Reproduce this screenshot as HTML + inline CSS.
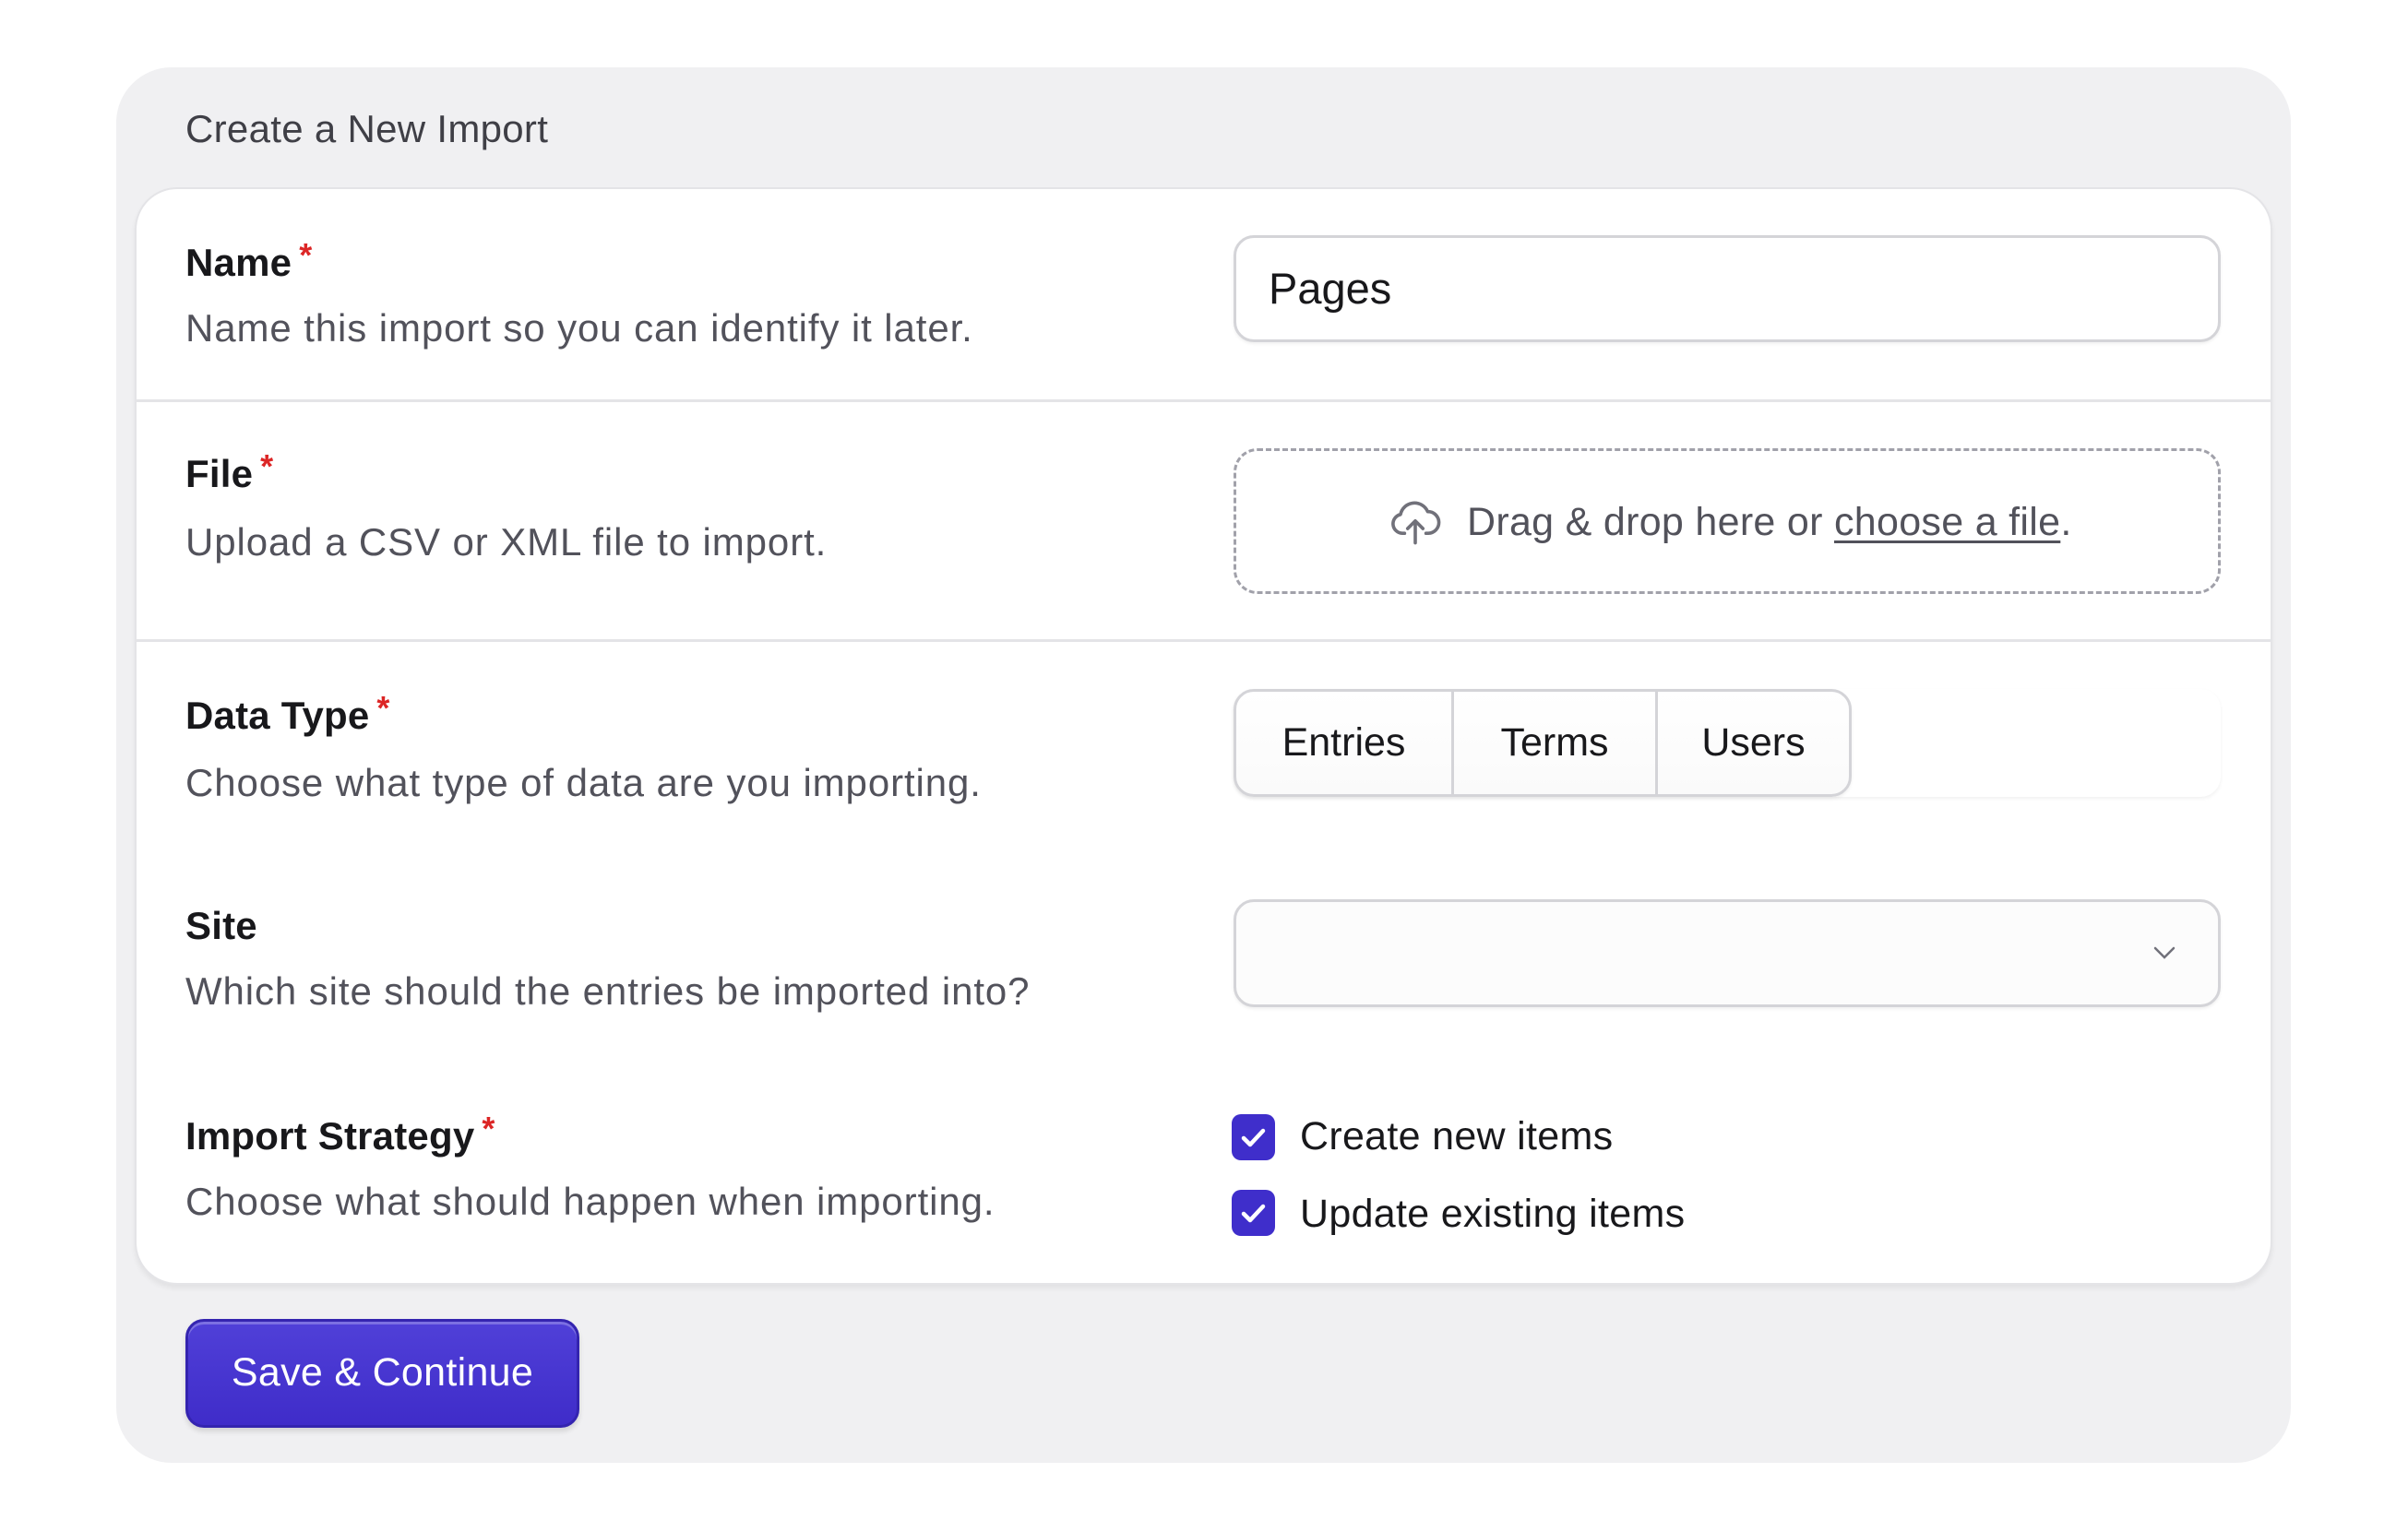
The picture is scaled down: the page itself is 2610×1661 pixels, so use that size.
<!DOCTYPE html>
<html><head><meta charset="utf-8"><style>
*{box-sizing:border-box;margin:0;padding:0}
body{width:2610px;height:1661px;background:#fff;font-family:"Liberation Sans",sans-serif;position:relative;overflow:hidden}
.a{position:absolute}
.outer{left:126px;top:73px;width:2357px;height:1513px;background:#f0f0f2;border-radius:60px}
.title{left:201px;top:114px;font-size:42px;color:#3f3f46;line-height:52px;letter-spacing:0.3px}
.card{left:146px;top:203px;width:2317px;height:1190px;background:#fff;border-radius:46px;border:2px solid #e4e4e7;box-shadow:0 4px 6px rgba(0,0,0,.06)}
.sep{left:148px;width:2313px;height:3px;background:#e4e4e7}
.lbl{left:201px;font-size:42px;font-weight:bold;color:#18181b;line-height:50px;letter-spacing:0.2px}
.lbl i{color:#dc2626;font-style:normal;font-size:36px;vertical-align:top;position:relative;top:-8px;margin-left:8px}
.desc{left:201px;font-size:42px;color:#52525b;line-height:50px;letter-spacing:0.9px}
.box{border:3px solid #d4d4d8;border-radius:22px;background:#fff;box-shadow:0 2px 3px rgba(0,0,0,.06)}
.cb{left:1335px;width:47px;height:50px;background:#3f2ecb;border-radius:10px}
.cbt{left:1409px;font-size:43px;color:#18181b;line-height:50px;letter-spacing:0.3px}
</style></head><body>
<div class="a outer"></div>
<div class="a title">Create a New Import</div>
<div class="a card"></div>
<div class="a sep" style="top:433px"></div>
<div class="a sep" style="top:693px"></div>

<div class="a lbl" style="top:260px">Name<i>*</i></div>
<div class="a desc" style="top:331px">Name this import so you can identify it later.</div>
<div class="a box" style="left:1337px;top:255px;width:1070px;height:116px"></div>
<div class="a" style="left:1375px;top:287px;font-size:47px;color:#18181b;line-height:52px">Pages</div>

<div class="a lbl" style="top:489px">File<i>*</i></div>
<div class="a desc" style="top:563px">Upload a CSV or XML file to import.</div>
<div class="a" style="left:1337px;top:486px;width:1070px;height:158px;border:3px dashed #a1a1aa;border-radius:26px"></div>
<svg class="a" style="left:1503px;top:533px" width="62" height="62" viewBox="0 0 24 24" fill="none" stroke="#71717a" stroke-width="1.4" stroke-linecap="round" stroke-linejoin="round"><path d="M7.5 17.5H6.5A4 4 0 0 1 5.8 9.6 6 6 0 0 1 17.2 8.4 4.5 4.5 0 0 1 17.5 17.5h-1"/><path d="M12 21.5v-9M8.8 15.5 12 12.3l3.2 3.2"/></svg>
<div class="a" style="left:1590px;top:540px;font-size:43px;color:#52525b;line-height:52px;letter-spacing:0.3px">Drag &amp; drop here or <span style="text-decoration:underline;text-decoration-thickness:3px;text-underline-offset:6px">choose a file</span>.</div>

<div class="a lbl" style="top:751px">Data Type<i>*</i></div>
<div class="a desc" style="top:824px">Choose what type of data are you importing.</div>
<div class="a" style="left:1337px;top:747px;width:1070px;height:117px;border-radius:22px;box-shadow:0 2px 4px rgba(0,0,0,.06)"></div>
<div class="a box" style="left:1337px;top:747px;width:670px;height:117px;background:linear-gradient(#fff,#fafafa);display:flex">
 <div style="width:236px;border-right:3px solid #d4d4d8;text-align:center;line-height:111px;font-size:43px;color:#18181b">Entries</div>
 <div style="width:221px;border-right:3px solid #d4d4d8;text-align:center;line-height:111px;font-size:43px;color:#18181b">Terms</div>
 <div style="flex:1;text-align:center;line-height:111px;font-size:43px;color:#18181b">Users</div>
</div>

<div class="a lbl" style="top:979px">Site</div>
<div class="a desc" style="top:1050px">Which site should the entries be imported into?</div>
<div class="a box" style="left:1337px;top:975px;width:1070px;height:117px;background:#fcfcfc"></div>
<svg class="a" style="left:2333px;top:1024px" width="26" height="18" viewBox="0 0 26 18" fill="none" stroke="#71717a" stroke-width="2.5" stroke-linecap="round"><path d="M3 4l10 10 10-10"/></svg>

<div class="a lbl" style="top:1207px">Import Strategy<i>*</i></div>
<div class="a desc" style="top:1278px">Choose what should happen when importing.</div>
<div class="a cb" style="top:1208px"></div>
<div class="a cb" style="top:1290px"></div>
<svg class="a" style="left:1335px;top:1208px" width="47" height="50" viewBox="0 0 47 50" fill="none" stroke="#fff" stroke-width="4.5" stroke-linecap="round" stroke-linejoin="round"><path d="M13 26l7 7 14-15"/></svg>
<svg class="a" style="left:1335px;top:1290px" width="47" height="50" viewBox="0 0 47 50" fill="none" stroke="#fff" stroke-width="4.5" stroke-linecap="round" stroke-linejoin="round"><path d="M13 26l7 7 14-15"/></svg>
<div class="a cbt" style="top:1207px">Create new items</div>
<div class="a cbt" style="top:1291px">Update existing items</div>

<div class="a" style="left:201px;top:1430px;width:427px;height:118px;border-radius:20px;background:linear-gradient(#5040d8,#3f2cc9);border:3px solid #3424b0;box-shadow:0 4px 6px rgba(0,0,0,.12),inset 0 3px 0 rgba(255,255,255,.25);color:#fff;font-size:43px;text-align:center;line-height:110px;letter-spacing:0.3px">Save &amp; Continue</div>
</body></html>
